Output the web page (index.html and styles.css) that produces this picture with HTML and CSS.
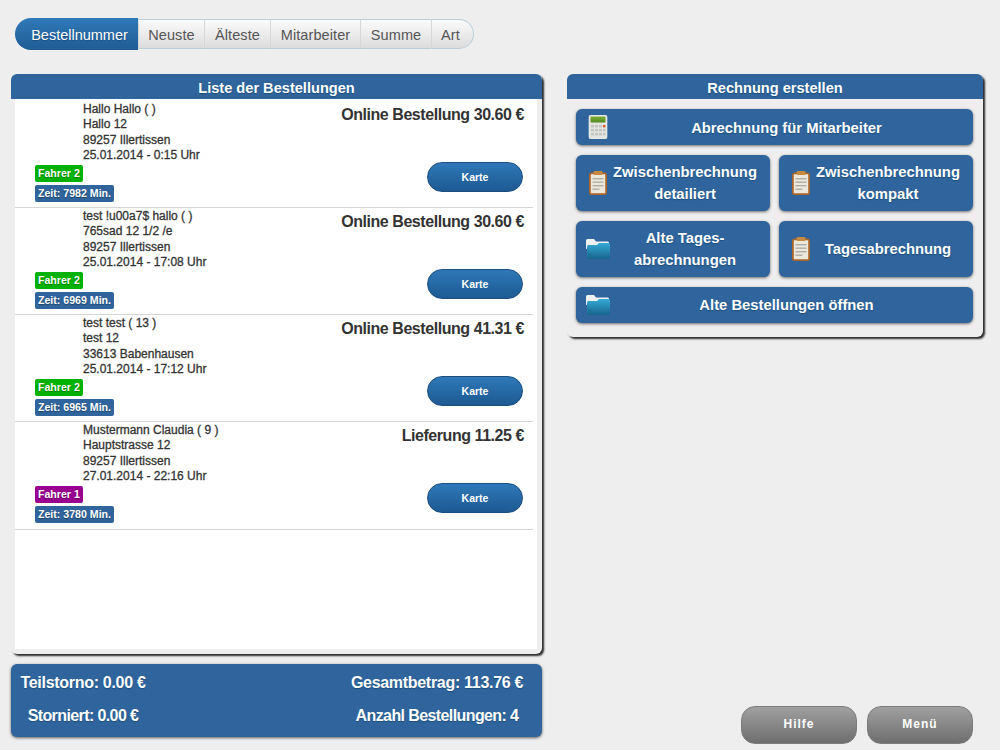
FILE: index.html
```html
<!DOCTYPE html>
<html lang="de">
<head>
  <meta charset="UTF-8" />
  <title>Bestellungen</title>
  <link rel="stylesheet" href="styles.css">
</head>
<body>

  <svg class="defs" width="0" height="0">
    <defs>
      <linearGradient id="folderFront" x1="0" y1="0" x2="0" y2="1">
        <stop offset="0" stop-color="#35abd6" />
        <stop offset="1" stop-color="#17658c" />
      </linearGradient>
      <linearGradient id="calcTop" x1="0" y1="0" x2="0" y2="1">
        <stop offset="0" stop-color="#7fb03a" />
        <stop offset="1" stop-color="#4f8a1e" />
      </linearGradient>
      <symbol id="icon-calc" viewBox="0 0 24 24">
        <rect x="3" y="0" width="18" height="24" rx="2" fill="#e3e4e0" stroke="#f4f4f2" stroke-width="0.6" />
        <rect x="4.5" y="1.5" width="15" height="6" rx="1" fill="url(#calcTop)" />
        <g fill="#c3c5c0">
          <rect x="5" y="10" width="3" height="2.4" /><rect x="9" y="10" width="3" height="2.4" /><rect x="13" y="10" width="3" height="2.4" />
          <rect x="5" y="14" width="3" height="2.4" /><rect x="9" y="14" width="3" height="2.4" /><rect x="13" y="14" width="3" height="2.4" /><rect x="17" y="14" width="2.4" height="2.4" />
          <rect x="5" y="18" width="3" height="2.4" /><rect x="9" y="18" width="3" height="2.4" /><rect x="13" y="18" width="3" height="2.4" /><rect x="17" y="18" width="2.4" height="2.4" />
        </g>
        <rect x="17" y="10" width="2.4" height="2.4" fill="#d9602a" />
      </symbol>
      <symbol id="icon-clip" viewBox="0 0 24 24">
        <rect x="3" y="1.5" width="18" height="22.5" rx="2.5" fill="#a9652a" />
        <rect x="4.8" y="3.2" width="14.4" height="19" rx="0.5" fill="#ece8dc" />
        <rect x="7.5" y="0" width="9" height="4" rx="1.2" fill="#c58a40" />
        <g fill="#aeaea8">
          <rect x="6.5" y="7" width="11" height="1.4" /><rect x="6.5" y="10.5" width="11" height="1.4" /><rect x="6.5" y="14" width="11" height="1.4" /><rect x="6.5" y="17.5" width="7" height="1.4" />
        </g>
      </symbol>
      <symbol id="icon-folder" viewBox="0 0 24 20">
        <path d="M0 1.5 Q0 0 1.5 0 H8 L10 2.5 H22 Q23 2.5 23 4 V10 H0 Z" fill="#eef0f2" />
        <path d="M1 7.5 Q1 6 2.5 6 H11 L13 4 H22.5 Q24 4 24 5.5 V18.5 Q24 20 22.5 20 H2.5 Q1 20 1 18.5 Z" fill="url(#folderFront)" />
      </symbol>
    </defs>
  </svg>

  <nav class="tabs">
    <a class="tab active">Bestellnummer</a>
    <a class="tab">Neuste</a>
    <a class="tab">Älteste</a>
    <a class="tab">Mitarbeiter</a>
    <a class="tab">Summe</a>
    <a class="tab last">Art</a>
  </nav>

  <main class="columns">
    <div class="col-left">
      <section class="panel orders">
        <h2 class="panel-title">Liste der Bestellungen</h2>
        <div class="panel-body">
          <ul class="order-list">
            <li class="order">
              <div class="order-info">
                <p class="address">Hallo Hallo ( )<br>Hallo 12<br>89257 Illertissen<br>25.01.2014 - 0:15 Uhr</p>
                <span class="badge green">Fahrer 2</span>
                <span class="badge blue">Zeit: 7982 Min.</span>
              </div>
              <div class="order-side">
                <h3>Online Bestellung 30.60 €</h3>
                <button class="map-btn" type="button">Karte</button>
              </div>
            </li>
            <li class="order">
              <div class="order-info">
                <p class="address">test !u00a7$ hallo ( )<br>765sad 12 1/2 /e<br>89257 Illertissen<br>25.01.2014 - 17:08 Uhr</p>
                <span class="badge green">Fahrer 2</span>
                <span class="badge blue">Zeit: 6969 Min.</span>
              </div>
              <div class="order-side">
                <h3>Online Bestellung 30.60 €</h3>
                <button class="map-btn" type="button">Karte</button>
              </div>
            </li>
            <li class="order">
              <div class="order-info">
                <p class="address">test test ( 13 )<br>test 12<br>33613 Babenhausen<br>25.01.2014 - 17:12 Uhr</p>
                <span class="badge green">Fahrer 2</span>
                <span class="badge blue">Zeit: 6965 Min.</span>
              </div>
              <div class="order-side">
                <h3>Online Bestellung 41.31 €</h3>
                <button class="map-btn" type="button">Karte</button>
              </div>
            </li>
            <li class="order">
              <div class="order-info">
                <p class="address">Mustermann Claudia ( 9 )<br>Hauptstrasse 12<br>89257 Illertissen<br>27.01.2014 - 22:16 Uhr</p>
                <span class="badge purple">Fahrer 1</span>
                <span class="badge blue">Zeit: 3780 Min.</span>
              </div>
              <div class="order-side">
                <h3>Lieferung 11.25 €</h3>
                <button class="map-btn" type="button">Karte</button>
              </div>
            </li>
          </ul>
        </div>
      </section>

      <section class="totals">
        <div class="totals-left">
          <p>Teilstorno: 0.00 €</p>
          <p class="tight">Storniert: 0.00 €</p>
        </div>
        <div class="totals-right">
          <p>Gesamtbetrag: 113.76 €</p>
          <p class="tight">Anzahl Bestellungen: 4</p>
        </div>
      </section>
    </div>

    <div class="col-right">
      <section class="panel invoice">
        <h2 class="panel-title">Rechnung erstellen</h2>
        <div class="invoice-grid">
          <button class="action wide first" type="button">
            <svg class="icon"><use href="#icon-calc" /></svg>
            <span>Abrechnung für Mitarbeiter</span>
          </button>
          <button class="action tall" type="button">
            <svg class="icon"><use href="#icon-clip" /></svg>
            <span>Zwischenbrechnung detailiert</span>
          </button>
          <button class="action tall" type="button">
            <svg class="icon"><use href="#icon-clip" /></svg>
            <span>Zwischenbrechnung kompakt</span>
          </button>
          <button class="action tall" type="button">
            <svg class="icon"><use href="#icon-folder" /></svg>
            <span>Alte Tages-<br>abrechnungen</span>
          </button>
          <button class="action tall" type="button">
            <svg class="icon"><use href="#icon-clip" /></svg>
            <span>Tagesabrechnung</span>
          </button>
          <button class="action wide" type="button">
            <svg class="icon"><use href="#icon-folder" /></svg>
            <span>Alte Bestellungen öffnen</span>
          </button>
        </div>
      </section>

      <div class="footer-btns">
        <button class="grey-btn help" type="button">Hilfe</button>
        <button class="grey-btn menu" type="button">Menü</button>
      </div>
    </div>
  </main>

</body>
</html>
```

FILE: styles.css
```css
* {
  box-sizing: border-box;
}

body {
  margin: 0;
  height: 750px;
  overflow: hidden;
  background-color: #eeeeee;
  font-family: "Liberation Sans", Arial, sans-serif;
  color: #333;
}

p, h2, h3, ul {
  margin: 0;
  padding: 0;
}

.defs {
  position: absolute;
}

/* tabs */
.tabs {
  display: grid;
  grid-template-columns: 123px 66px 66px 90px 71px 43px;
  align-items: center;
  width: 459px;
  height: 32px;
  margin: 18px 0 24px 15px;
}

.tab {
  display: flex;
  align-items: center;
  justify-content: center;
  height: 30px;
  padding-top: 1px;
  font-size: 14.5px;
  letter-spacing: 0.1px;
  color: #555;
  background: linear-gradient(#fbfbfb, #dcdcdc);
  border: 1px solid #b9ced9;
  border-left: 1px solid #d4d8da;
  border-right: none;
}

.tab.active {
  height: 32px;
  padding-left: 6px;
  letter-spacing: 0;
  color: #fff;
  text-shadow: 0 1px 1px #1c4d7d;
  background: linear-gradient(#3079b8, #1f5c94);
  border: none;
  border-radius: 16px 0 0 16px;
}

.tab.last {
  padding-right: 4px;
  border-right: 1px solid #b9ced9;
  border-radius: 0 15px 15px 0;
}

/* layout */
.columns {
  display: flex;
  height: 670px;
  padding-left: 11px;
}

.col-left {
  display: flex;
  flex-direction: column;
  width: 531px;
  margin-right: 25px;
}

.col-right {
  display: flex;
  flex-direction: column;
  width: 416px;
}

.panel {
  background: #eeeeee;
  border-radius: 6px;
  box-shadow: 2px 2px 2px #2a2a2a;
}

.panel-title {
  height: 25px;
  line-height: 28px;
  text-align: center;
  font-size: 14.6px;
  font-weight: bold;
  color: #fff;
  text-shadow: 0 1px 1px #1c4d7d;
  background: #2f659c;
  border-radius: 6px 6px 0 0;
}

/* order list */
.orders {
  height: 580px;
}

.panel-body {
  height: 550px;
  margin: 0 5px 0 4px;
  padding-top: 2px;
  background: #fff;
}

.order-list {
  list-style: none;
}

.order {
  display: flex;
  justify-content: space-between;
  height: 107px;
  margin-right: 4px;
  padding: 1px 9px 0 20px;
  border-bottom: 1px solid #d6d6d6;
}

.order:last-child {
  height: 108px;
}

.order-info {
  display: flex;
  flex-direction: column;
  align-items: flex-start;
}

.address {
  margin: 0 0 2px 48px;
  font-size: 12px;
  line-height: 15.3px;
  color: #333;
  -webkit-text-stroke: 0.3px #333;
}

.badge {
  height: 17px;
  margin-bottom: 3px;
  padding: 0 3px;
  font-size: 10.6px;
  line-height: 17px;
  font-weight: bold;
  color: #fff;
  text-shadow: 0 1px 1px rgba(0, 0, 0, 0.35);
  border-radius: 2px;
}

.green {
  background: #00b200;
}

.blue {
  background: #2f659c;
}

.purple {
  background: #990090;
}

.order-side {
  display: flex;
  flex-direction: column;
  align-items: flex-end;
}

.order-side h3 {
  font-size: 16px;
  line-height: 25px;
  letter-spacing: -0.44px;
  font-weight: bold;
  color: #333;
}

.map-btn {
  width: 96px;
  height: 30px;
  margin-top: 35px;
  margin-right: 1px;
  font-family: inherit;
  font-size: 10.5px;
  font-weight: bold;
  color: #fff;
  background: linear-gradient(#2f78b8, #1d5a92);
  border: 1px solid #1c4e7e;
  border-radius: 15px;
}

/* totals */
.totals {
  display: flex;
  justify-content: space-between;
  height: 73px;
  margin-top: 10px;
  padding-right: 18px;
  font-size: 16px;
  letter-spacing: -0.3px;
  font-weight: bold;
  color: #fff;
  text-shadow: 0 1px 1px #1c4d7d;
  text-align: center;
  background: #2f659c;
  border-radius: 6px;
  box-shadow: 0 1px 3px rgba(0, 0, 0, 0.6);
}

.totals-left {
  width: 144px;
}

.totals-right {
  width: 174px;
}

.totals p {
  height: 33px;
  line-height: 37px;
  white-space: nowrap;
}

.totals .tight {
  letter-spacing: -0.6px;
}

/* invoice */
.invoice {
  height: 263px;
}

.invoice-grid {
  display: grid;
  grid-template-columns: 194px 194px;
  column-gap: 9px;
  row-gap: 10px;
  padding: 10px 0 0 9px;
}

.action {
  display: flex;
  align-items: center;
  padding: 0 0 0 10px;
  font-family: inherit;
  font-size: 14.8px;
  font-weight: bold;
  line-height: 22px;
  color: #fff;
  text-shadow: 0 1px 1px #1c4d7d;
  background: #2f659c;
  border: none;
  border-radius: 6px;
  box-shadow: 0 1px 3px rgba(0, 0, 0, 0.55);
}

.action span {
  flex: 1;
  margin-left: -10px;
  text-align: center;
}

.action.wide {
  grid-column: span 2;
  height: 36px;
}

.action.first span {
  padding-top: 2px;
}

.action.tall {
  height: 56px;
}

.action.tall span {
  padding-bottom: 1px;
}

.icon {
  flex: none;
  width: 24px;
  height: 24px;
  margin-bottom: 1px;
}

/* footer buttons */
.footer-btns {
  display: flex;
  gap: 10px;
  margin-top: auto;
  margin-left: 174px;
}

.grey-btn {
  height: 38px;
  padding-bottom: 3px;
  font-family: inherit;
  font-size: 12px;
  font-weight: bold;
  letter-spacing: 1px;
  color: #fff;
  background: linear-gradient(#a0a0a0, #6e6e6e);
  border: 1px solid #7c7c7c;
  border-radius: 14px;
}

.help {
  width: 116px;
}

.menu {
  width: 106px;
}
```
